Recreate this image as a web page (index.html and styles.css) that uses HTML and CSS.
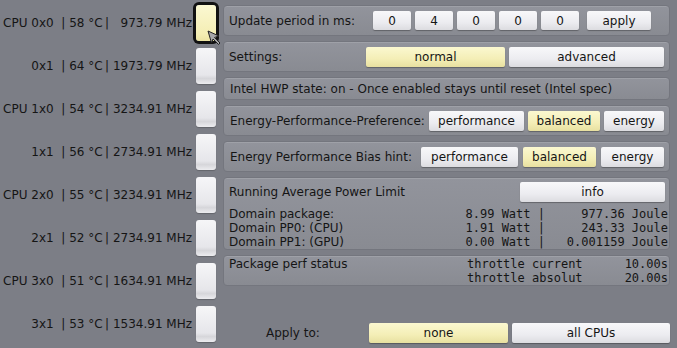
FILE: index.html
```html
<!DOCTYPE html>
<html lang="en">
<head>
  <meta charset="UTF-8">
  <title>CPU Control</title>
  <meta name="viewport" content="width=device-width, initial-scale=1.0">
  <link rel="stylesheet" href="styles.css">
</head>
<body>

<div class="app">
  <div class="cpus">
    <div class="cpu"><span class="cpu-label">CPU 0x0  | 58 °C&#8201;|   973.79 MHz</span><div class="cpu-btn selected"></div></div>
    <div class="cpu"><span class="cpu-label">0x1  | 64 °C&#8201;| 1973.79 MHz</span><div class="cpu-btn"></div></div>
    <div class="cpu"><span class="cpu-label">CPU 1x0  | 54 °C&#8201;| 3234.91 MHz</span><div class="cpu-btn"></div></div>
    <div class="cpu"><span class="cpu-label">1x1  | 56 °C&#8201;| 2734.91 MHz</span><div class="cpu-btn"></div></div>
    <div class="cpu"><span class="cpu-label">CPU 2x0  | 55 °C&#8201;| 3234.91 MHz</span><div class="cpu-btn"></div></div>
    <div class="cpu"><span class="cpu-label">2x1  | 52 °C&#8201;| 2734.91 MHz</span><div class="cpu-btn"></div></div>
    <div class="cpu"><span class="cpu-label">CPU 3x0  | 51 °C&#8201;| 1634.91 MHz</span><div class="cpu-btn"></div></div>
    <div class="cpu"><span class="cpu-label">3x1  | 53 °C&#8201;| 1534.91 MHz</span><div class="cpu-btn"></div></div>
  </div>

  <div class="controls">
    <div class="panel">
      <span class="label period-label">Update period in ms:</span>
      <div class="btn-group">
        <button class="btn digit">0</button>
        <button class="btn digit">4</button>
        <button class="btn digit">0</button>
        <button class="btn digit">0</button>
        <button class="btn digit">0</button>
      </div>
      <button class="btn apply">apply</button>
    </div>

    <div class="panel">
      <span class="label settings-label">Settings:</span>
      <div class="btn-group">
        <button class="btn active w-normal">normal</button>
        <button class="btn w-advanced">advanced</button>
      </div>
    </div>

    <div class="panel short">
      <span class="label">Intel HWP state: on - Once enabled stays until reset (Intel spec)</span>
    </div>

    <div class="panel">
      <span class="label">Energy-Performance-Preference:</span>
      <div class="btn-group right">
        <button class="btn w-95">performance</button>
        <button class="btn active w-72">balanced</button>
        <button class="btn w-60">energy</button>
      </div>
    </div>

    <div class="panel">
      <span class="label">Energy Performance Bias hint:</span>
      <div class="btn-group right wide">
        <button class="btn w-97">performance</button>
        <button class="btn active w-73">balanced</button>
        <button class="btn w-63">energy</button>
      </div>
    </div>

    <div class="panel rapl">
      <div class="rapl-head">
        <span class="label">Running Average Power Limit</span>
        <button class="btn info">info</button>
      </div>
      <div class="data-row"><span class="label">Domain package:</span><span class="mono watt">8.99 Watt |</span><span class="mono joule">977.36 Joule</span></div>
      <div class="data-row"><span class="label">Domain PP0: (CPU)</span><span class="mono watt">1.91 Watt |</span><span class="mono joule">243.33 Joule</span></div>
      <div class="data-row"><span class="label">Domain PP1: (GPU)</span><span class="mono watt">0.00 Watt |</span><span class="mono joule">0.001159 Joule</span></div>
    </div>

    <div class="panel perf">
      <div class="perf-row"><span class="label">Package perf status</span><span class="mono">throttle current</span><span class="mono val">10.00s</span></div>
      <div class="perf-row"><span class="label"></span><span class="mono">throttle absolut</span><span class="mono val">20.00s</span></div>
    </div>

    <div class="apply-row">
      <span class="label apply-label">Apply to:</span>
      <div class="btn-group">
        <button class="btn active w-normal">none</button>
        <button class="btn w-all">all CPUs</button>
      </div>
    </div>
  </div>
</div>

<svg class="cursor" width="16" height="16" viewBox="0 0 16 16">
  <polygon points="1,1 12,6 7.5,7.5 13,13 11.5,14.5 6,9 4.5,13" fill="#a6a6a8" stroke="#222" stroke-width="1" stroke-linejoin="round"/>
</svg>

</body>
</html>
```

FILE: styles.css
```css
body { margin: 0; width: 677px; height: 348px; overflow: hidden; background: #7c7e86; font-family: "DejaVu Sans", sans-serif; font-size: 12px; color: #151515; position: relative; }
.app { display: flex; }

.cpus { width: 216px; padding-top: 2px; }
.cpu { height: 43px; display: flex; align-items: flex-start; justify-content: flex-end; }
.cpu-label { white-space: pre; line-height: 36px; margin-top: 3px; margin-right: 4px; }
.cpu-btn { width: 20px; height: 36px; margin-top: 3px; border-radius: 3px; background: linear-gradient(#f6f6f8, #e6e6ea 75%, #d6d6da 85%, #ececef); box-shadow: 0 1px 1px rgba(0,0,0,0.2); }
.cpu-btn.selected { background: linear-gradient(#fbf8d2, #f4eeb4 80%, #ece4a2); box-shadow: 0 0 0 3px #111; }

.controls { width: 447px; margin-left: 7px; padding-top: 5px; }
.panel { box-sizing: border-box; height: 31px; margin-bottom: 5px; padding: 0 5px 0 6px; display: flex; align-items: center; border-radius: 4px; background: linear-gradient(#92949c, #898b92); border: 1px solid #74767e; box-shadow: inset 0 1px 0 rgba(255,255,255,0.12); }
.panel.short { height: 23px; }
.label { white-space: pre; }
.period-label { width: 144px; margin-left: -1px; }
.settings-label { width: 137px; margin-left: -1px; }

.btn-group { display: flex; gap: 4px; }
.btn-group.right { margin-left: auto; }
.btn-group.wide { gap: 5px; }
.btn { font-family: "DejaVu Sans", sans-serif; font-size: 12px; color: #151515; height: 19px; padding: 0; border: none; border-radius: 2px; background: linear-gradient(#f8f8fa, #ececf0 60%, #dcdce0); box-shadow: 0 1px 1px rgba(0,0,0,0.3); }
.btn.active { background: linear-gradient(#fbf8d0, #f4eeb6 60%, #e8e0a0); }
.digit { width: 38px; }
.apply { width: 64px; margin-left: 8px; }
.w-normal { width: 139px; height: 20px; }
.w-advanced { width: 155px; height: 20px; }
.w-95 { width: 95px; height: 20px; }
.w-72 { width: 72px; height: 20px; }
.w-60 { width: 60px; height: 20px; }
.w-97 { width: 97px; height: 20px; }
.w-73 { width: 73px; height: 20px; }
.w-63 { width: 63px; height: 20px; }
.w-all { width: 158px; height: 20px; }

.panel.rapl { height: 73px; display: block; padding: 4px 1px 0 5px; }
.rapl-head { display: flex; align-items: center; height: 20px; margin-bottom: 5px; }
.info { width: 145px; height: 20px; margin-left: auto; margin-right: 3px; }
.data-row { display: grid; grid-template-columns: 1fr 113px 123px; line-height: 14px; }
.mono { font-family: "DejaVu Sans Mono", monospace; white-space: pre; }
.watt, .joule { text-align: right; }

.panel.perf { display: block; padding: 1px 1px 0 5px; }
.perf-row { display: grid; grid-template-columns: 238px 1fr auto; line-height: 14px; }
.val { text-align: right; }

.apply-row { display: flex; align-items: center; height: 20px; margin-top: 37px; }
.apply-label { width: 103px; padding-left: 43px; }

.cursor { position: absolute; left: 207px; top: 30px; }
```
